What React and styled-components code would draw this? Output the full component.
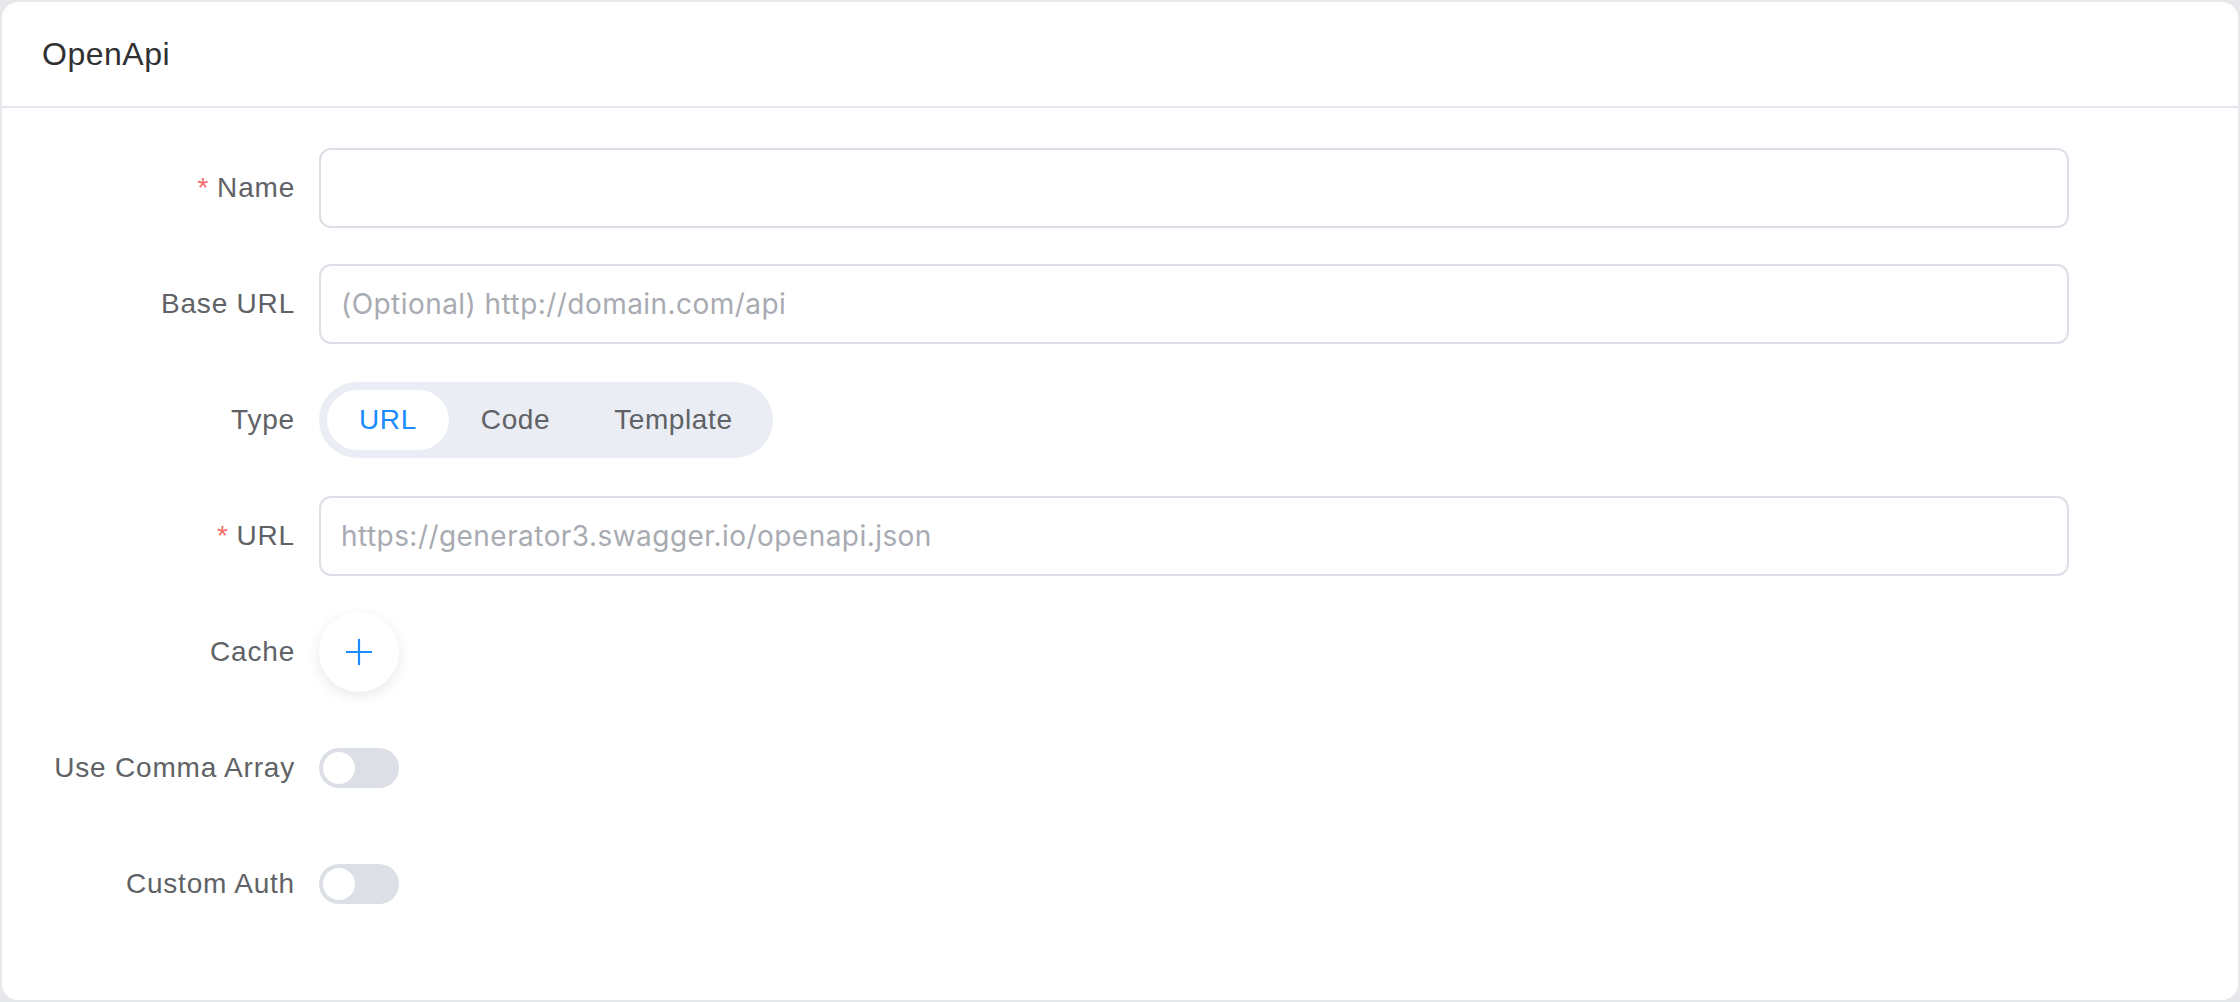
import React, { useState } from "react";
import styled, { createGlobalStyle } from "styled-components";

const GlobalStyle = createGlobalStyle`
  html, body {
    margin: 0;
    padding: 0;
    background: #e6e8ec;
  }
  * {
    box-sizing: border-box;
  }
  body {
    font-family: "Liberation Sans", Arial, sans-serif;
  }
`;

const TYPES = ["URL", "Code", "Template"];

const PlusIcon = () => (
  <svg width="26" height="26" viewBox="0 0 26 26" fill="none">
    <path d="M13 0V26M0 13H26" stroke="#1a8cff" strokeWidth="2.2" />
  </svg>
);

const Switch = ({ on, onToggle }) => (
  <SwitchTrack $on={on} onClick={onToggle}>
    <SwitchKnob />
  </SwitchTrack>
);

const Field = ({ label, required, children }) => (
  <Row>
    <Label>
      {required && <Star>*</Star>}
      {label}
    </Label>
    <Control>{children}</Control>
  </Row>
);

export default function App() {
  const [type, setType] = useState("URL");
  const [comma, setComma] = useState(false);
  const [auth, setAuth] = useState(false);

  return (
    <Page>
      <GlobalStyle />
      <Card>
        <Header>
          <Title>OpenApi</Title>
        </Header>
        <Body>
          <Form>
            <Field label="Name" required>
              <TextInput />
            </Field>
            <Field label="Base URL">
              <TextInput placeholder="(Optional) http://domain.com/api" />
            </Field>
            <Field label="Type">
              <Segmented>
                {TYPES.map((t) => (
                  <SegItem
                    key={t}
                    $active={type === t}
                    onClick={() => setType(t)}
                  >
                    {t}
                  </SegItem>
                ))}
              </Segmented>
            </Field>
            <Field label="URL" required>
              <TextInput placeholder="https://generator3.swagger.io/openapi.json" />
            </Field>
            <Field label="Cache">
              <CircleButton>
                <PlusIcon />
              </CircleButton>
            </Field>
            <Field label="Use Comma Array">
              <Switch on={comma} onToggle={() => setComma(!comma)} />
            </Field>
            <Field label="Custom Auth">
              <Switch on={auth} onToggle={() => setAuth(!auth)} />
            </Field>
          </Form>
        </Body>
      </Card>
    </Page>
  );
}

const Page = styled.div`
  padding: 2px;
  min-height: 1002px;
`;

const Card = styled.div`
  background: #fff;
  border-radius: 16px;
  overflow: hidden;
`;

const Header = styled.div`
  height: 106px;
  display: flex;
  align-items: center;
  padding: 0 40px;
  border-bottom: 2px solid #e4e7ed;
`;

const Title = styled.div`
  font-size: 32px;
  letter-spacing: 0.5px;
  color: #303133;
`;

const Body = styled.div`
  padding: 40px 38px 40px 37px;
`;

const Form = styled.div`
  max-width: 2030px;
  display: flex;
  flex-direction: column;
`;

const Row = styled.div`
  display: flex;
  align-items: center;
  height: 80px;
  margin-bottom: 36px;
`;

const Label = styled.div`
  width: 280px;
  flex-shrink: 0;
  padding-right: 24px;
  display: flex;
  justify-content: flex-end;
  align-items: center;
  font-size: 28px;
  letter-spacing: 0.8px;
  color: #606266;
`;

const Star = styled.span`
  color: #f56c6c;
  margin-right: 8px;
`;

const Control = styled.div`
  flex: 1;
  display: flex;
  align-items: center;
`;

const TextInput = styled.input`
  width: 100%;
  height: 80px;
  border: 2px solid #dcdfe6;
  border-radius: 12px;
  padding: 0 20px;
  font-family: Inter, "Liberation Sans", sans-serif;
  font-size: 28px;
  letter-spacing: 0.45px;
  color: #606266;
  outline: none;
  background: #fff;

  &::placeholder {
    color: #a8abb2;
  }
`;

const Segmented = styled.div`
  display: inline-flex;
  height: 76px;
  padding: 8px;
  border-radius: 38px;
  background: #eaedf4;
`;

const SegItem = styled.button`
  height: 60px;
  padding: 0 32px;
  border: none;
  border-radius: 30px;
  font-family: inherit;
  font-size: 28px;
  letter-spacing: 0.6px;
  cursor: pointer;
  background: ${(p) => (p.$active ? "#fff" : "transparent")};
  color: ${(p) => (p.$active ? "#1a8cff" : "#606266")};
`;

const CircleButton = styled.button`
  width: 80px;
  height: 80px;
  border: none;
  border-radius: 50%;
  background: #fff;
  box-shadow: 0 4px 14px rgba(0, 0, 0, 0.09);
  display: flex;
  align-items: center;
  justify-content: center;
  padding: 0;
  cursor: pointer;
`;

const SwitchTrack = styled.div`
  width: 80px;
  height: 40px;
  padding: 4px;
  border-radius: 20px;
  background: ${(p) => (p.$on ? "#1a8cff" : "#dcdfe6")};
  display: flex;
  justify-content: ${(p) => (p.$on ? "flex-end" : "flex-start")};
  cursor: pointer;
`;

const SwitchKnob = styled.div`
  width: 32px;
  height: 32px;
  border-radius: 50%;
  background: #fff;
`;
